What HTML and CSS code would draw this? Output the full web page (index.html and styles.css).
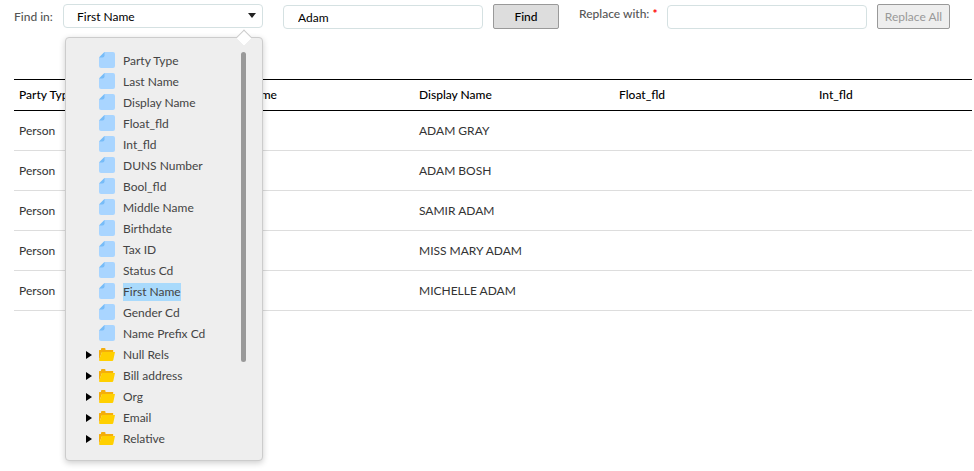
FILE: index.html
```html
<!DOCTYPE html>
<html lang="en">
<head>
<meta charset="utf-8">
<meta name="viewport" content="width=device-width, initial-scale=1">
<title>Find and Replace</title>
<link rel="stylesheet" href="styles.css">
</head>
<body>
<svg class="sprite" aria-hidden="true">
  <symbol id="file" viewBox="0 0 16 16">
    <path fill="#a9d5ff" d="M5.500 0H14a2 2 0 0 1 2 2v12a2 2 0 0 1-2 2H2a2 2 0 0 1-2-2V5.500z"/>
    <path fill="#77bcf8" d="M0 5.500 5.500 0v3.500a2 2 0 0 1-2 2z"/>
  </symbol>
  <symbol id="folder" viewBox="0 0 16 16">
    <path fill="#ffe08a" d="M7 4h7.500v4H7z"/>
    <path fill="#f4ae0b" d="M0 4.500Q0 4 .5 4H2V3q0-1 1-1h2.500q1 0 1 1v1H14v2H3L0 14z"/>
    <path fill="#ffd000" d="M3 6H16L14.300 14q-.2 1-1.200 1H1Q0 15 0 14z"/>
  </symbol>
  <symbol id="caret" viewBox="0 0 6 8"><path d="M0 0 6 4 0 8z"/></symbol>
</svg>
<form class="toolbar">
  <label class="label" for="field">Find in:</label>
  <div class="picker">
    <select class="field" id="field"><option>First Name</option></select>
    <div class="menu">
      <ul class="tree">
        <li class="item"><svg class="icon"><use href="#file"/></svg><span>Party Type</span></li>
        <li class="item"><svg class="icon"><use href="#file"/></svg><span>Last Name</span></li>
        <li class="item"><svg class="icon"><use href="#file"/></svg><span>Display Name</span></li>
        <li class="item"><svg class="icon"><use href="#file"/></svg><span>Float_fld</span></li>
        <li class="item"><svg class="icon"><use href="#file"/></svg><span>Int_fld</span></li>
        <li class="item"><svg class="icon"><use href="#file"/></svg><span>DUNS Number</span></li>
        <li class="item"><svg class="icon"><use href="#file"/></svg><span>Bool_fld</span></li>
        <li class="item"><svg class="icon"><use href="#file"/></svg><span>Middle Name</span></li>
        <li class="item"><svg class="icon"><use href="#file"/></svg><span>Birthdate</span></li>
        <li class="item"><svg class="icon"><use href="#file"/></svg><span>Tax ID</span></li>
        <li class="item"><svg class="icon"><use href="#file"/></svg><span>Status Cd</span></li>
        <li class="item"><svg class="icon"><use href="#file"/></svg><span class="selected">First Name</span></li>
        <li class="item"><svg class="icon"><use href="#file"/></svg><span>Gender Cd</span></li>
        <li class="item"><svg class="icon"><use href="#file"/></svg><span>Name Prefix Cd</span></li>
        <li class="item"><button class="toggle" type="button" aria-label="Expand Null Rels"><svg class="caret"><use href="#caret"/></svg></button><svg class="icon"><use href="#folder"/></svg><span>Null Rels</span></li>
        <li class="item"><button class="toggle" type="button" aria-label="Expand Bill address"><svg class="caret"><use href="#caret"/></svg></button><svg class="icon"><use href="#folder"/></svg><span>Bill address</span></li>
        <li class="item"><button class="toggle" type="button" aria-label="Expand Org"><svg class="caret"><use href="#caret"/></svg></button><svg class="icon"><use href="#folder"/></svg><span>Org</span></li>
        <li class="item"><button class="toggle" type="button" aria-label="Expand Email"><svg class="caret"><use href="#caret"/></svg></button><svg class="icon"><use href="#folder"/></svg><span>Email</span></li>
        <li class="item"><button class="toggle" type="button" aria-label="Expand Relative"><svg class="caret"><use href="#caret"/></svg></button><svg class="icon"><use href="#folder"/></svg><span>Relative</span></li>
      </ul>
      <div class="scroll"><div class="thumb"></div></div>
    </div>
  </div>
  <input class="field query" type="text" aria-label="Find text" value="Adam">
  <button class="button find" type="button">Find</button>
  <label class="label replace-label" for="replacement">Replace with: <span class="required">*</span></label>
  <input class="field" id="replacement" type="text">
  <button class="button replace" type="button" disabled>Replace All</button>
</form>
<main class="results">
  <table class="table">
    <thead>
      <tr><th>Party Type</th><th>First Name</th><th>Display Name</th><th>Float_fld</th><th>Int_fld</th></tr>
    </thead>
    <tbody>
      <tr><td>Person</td><td></td><td>ADAM GRAY</td><td></td><td></td></tr>
      <tr><td>Person</td><td></td><td>ADAM BOSH</td><td></td><td></td></tr>
      <tr><td>Person</td><td></td><td>SAMIR ADAM</td><td></td><td></td></tr>
      <tr><td>Person</td><td></td><td>MISS MARY ADAM</td><td></td><td></td></tr>
      <tr><td>Person</td><td></td><td>MICHELLE ADAM</td><td></td><td></td></tr>
    </tbody>
  </table>
</main>
</body>
</html>
```
FILE: styles.css
```css
* { box-sizing: border-box; }

body {
  min-height: 100vh;
  margin: 0;
  background: #fff;
  color: #333;
  font: 12px/16px Lato, "Liberation Sans", sans-serif;
}

.sprite { position: absolute; width: 0; height: 0; }

.toolbar {
  display: flex;
  align-items: flex-start;
  padding: 4px 24px 0 14px;
}

.label {
  flex: none;
  width: 49px;
  padding-top: 5px;
  color: #555;
  font-weight: 500;
  white-space: nowrap;
}

.replace-label { width: 88px; padding-top: 2px; }
.required { color: #f00; font-weight: 700; }

.picker { position: relative; flex: 0 1 200px; }

.field {
  flex: 0 1 200px;
  min-width: 0;
  width: 200px;
  height: 24px;
  margin: 1px 0 0;
  padding: 0 14px;
  border: 1px solid #d5e1e2;
  border-radius: 4px;
  background: #fff;
  color: #000;
  font: inherit;
}

select.field {
  display: block;
  width: 100%;
  margin: 0;
  padding: 2px 13px 0;
  appearance: none;
}

.picker::after {
  content: "";
  position: absolute;
  top: 9px;
  right: 7px;
  border: 4px solid transparent;
  border-top: 5px solid #222;
  border-bottom: 0;
  pointer-events: none;
}

.query { margin-left: 20px; }

.button {
  flex: none;
  height: 25px;
  margin: 0 0 0 10px;
  padding: 0;
  border: 1px solid #999;
  border-radius: 2px;
  background: #ddd;
  color: #000;
  font: inherit;
}

.find { width: 66px; margin-right: 20px; font-weight: 500; }
.replace { width: 73px; }
.button:disabled { background: #eee; color: #999; }

.menu {
  position: absolute;
  z-index: 2;
  top: 33px;
  left: 2px;
  right: 0;
  display: flex;
  justify-content: space-between;
  padding: 12px 16px 11px 19px;
  border: 1px solid #ccc;
  border-radius: 4px;
  background: #eee;
  box-shadow: 0 2px 6px rgba(0, 0, 0, 0.2);
}

.menu::before {
  content: "";
  position: absolute;
  top: -6px;
  right: 12px;
  width: 10px;
  height: 10px;
  border: 1px solid #ccc;
  border-color: #ccc transparent transparent #ccc;
  background: #fff;
  background-clip: padding-box;
  transform: rotate(45deg);
}

.tree { margin: 0; padding: 0; list-style: none; color: #444; line-height: 18px; }

.item {
  display: flex;
  align-items: flex-start;
  height: 21px;
  padding: 2px 0 0 14px;
}

.item:has(.toggle) { padding-left: 0; }
.icon { width: 16px; height: 16px; margin-right: 8px; }

.toggle {
  width: 14px;
  height: 18px;
  padding: 0 0 0 1px;
  border: 0;
  background: none;
  text-align: left;
}

.caret { display: block; width: 6px; height: 8px; }
.selected { background: #a9dafc; }

.scroll { width: 5px; padding-top: 2px; }
.thumb { height: 78%; border-radius: 3px; background: #999; }

.results { margin: 50px 2px 0 14px; overflow: hidden; }

.table {
  width: 100%;
  min-width: 1000px;
  table-layout: fixed;
  border-collapse: collapse;
}

th, td { padding: 0 5px; text-align: left; }

th {
  height: 31px;
  border-top: 1px solid #000;
  border-bottom: 1px solid #000;
  color: #000;
  font-weight: 500;
}

td { height: 40px; border-bottom: 1px solid #ddd; }
```
